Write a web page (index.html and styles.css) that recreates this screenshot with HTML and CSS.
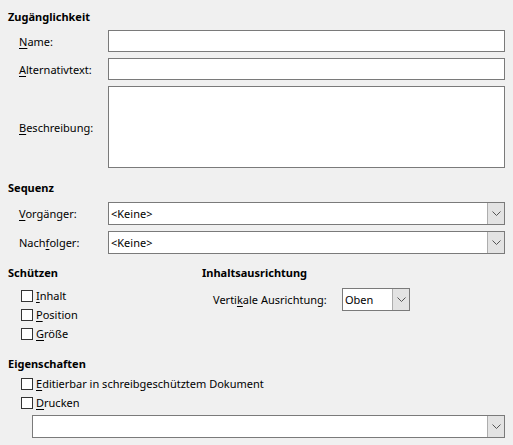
FILE: index.html
```html
<!DOCTYPE html>
<html lang="de">
<head>
<meta charset="utf-8">
<link rel="stylesheet" href="styles.css">
</head>
<body>
<div class="dlg">
  <div class="head h-first">Zugänglichkeit</div>
  <div class="form">
    <label class="lbl"><u>N</u>ame:</label>
    <div class="field"></div>
    <label class="lbl"><u>A</u>lternativtext:</label>
    <div class="field"></div>
    <label class="lbl"><u>B</u>eschreibung:</label>
    <div class="field area"></div>
  </div>

  <div class="head h-seq">Sequenz</div>
  <div class="form form-seq">
    <label class="lbl"><u>V</u>orgänger:</label>
    <div class="combo"><span class="val">&lt;Keine&gt;</span><span class="btn"><svg width="9" height="5" viewBox="0 0 9 5"><path d="M0.5 0.5 L4.5 4.5 L8.5 0.5" fill="none" stroke="#555" stroke-width="1"/></svg></span></div>
    <label class="lbl">Nach<u>f</u>olger:</label>
    <div class="combo"><span class="val">&lt;Keine&gt;</span><span class="btn"><svg width="9" height="5" viewBox="0 0 9 5"><path d="M0.5 0.5 L4.5 4.5 L8.5 0.5" fill="none" stroke="#555" stroke-width="1"/></svg></span></div>
  </div>

  <div class="cols">
    <div class="col">
      <div class="head">Schützen</div>
      <div class="checks">
        <div class="chk"><span class="box"></span><span><u>I</u>nhalt</span></div>
        <div class="chk"><span class="box"></span><span><u>P</u>osition</span></div>
        <div class="chk"><span class="box"></span><span><u>G</u>röße</span></div>
      </div>
    </div>
    <div class="col">
      <div class="head">Inhaltsausrichtung</div>
      <div class="valign">
        <label class="lbl2">Verti<u>k</u>ale Ausrichtung:</label>
        <div class="combo small"><span class="val">Oben</span><span class="btn"><svg width="9" height="5" viewBox="0 0 9 5"><path d="M0.5 0.5 L4.5 4.5 L8.5 0.5" fill="none" stroke="#555" stroke-width="1"/></svg></span></div>
      </div>
    </div>
  </div>

  <div class="head h-eig">Eigenschaften</div>
  <div class="checks checks-eig">
    <div class="chk"><span class="box"></span><span><u>E</u>ditierbar in schreibgeschütztem Dokument</span></div>
    <div class="chk"><span class="box"></span><span><u>D</u>rucken</span></div>
  </div>
  <div class="combo wide"><span class="val"></span><span class="btn"><svg width="9" height="5" viewBox="0 0 9 5"><path d="M0.5 0.5 L4.5 4.5 L8.5 0.5" fill="none" stroke="#555" stroke-width="1"/></svg></span></div>
</div>
</body>
</html>
```
FILE: styles.css
```css
html, body {
  margin: 0;
  padding: 0;
  background: #f0f0f0;
}
body {
  font-family: "Noto Sans", "Open Sans", sans-serif;
  font-size: 11px;
  color: #000;
}
u {
  text-decoration: underline;
  text-underline-offset: 2px;
}
.dlg {
  padding: 9px 8px 0 8px;
}
.head {
  font-weight: bold;
  height: 16px;
  line-height: 16px;
}
.form {
  display: grid;
  grid-template-columns: 100px 1fr;
  row-gap: 6px;
  align-items: center;
  margin-top: 5px;
}
.lbl {
  padding-left: 11px;
}
.field {
  height: 20px;
  background: #fff;
  border: 1px solid #7a7a7a;
}
.field.area {
  height: 80px;
}
.h-seq {
  margin-top: 12px;
}
.form-seq {
  margin-top: 6px;
  row-gap: 6px;
}
.combo {
  display: flex;
  height: 21px;
  background: #fff;
  border: 1px solid #7a7a7a;
}
.combo .val {
  flex: 1;
  line-height: 21px;
  padding-left: 2px;
}
.combo .btn {
  width: 16px;
  background: #e3e3e3;
  border-left: 1px solid #adadad;
  display: flex;
  align-items: center;
  justify-content: center;
}
.cols {
  display: grid;
  grid-template-columns: 194px 1fr;
  margin-top: 11px;
}
.checks {
  margin-top: 5px;
  display: flex;
  flex-direction: column;
}
.checks-eig {
  margin-top: 2px;
}
.chk {
  display: flex;
  align-items: center;
  height: 19px;
  padding-left: 13px;
}
.box {
  width: 10px;
  height: 10px;
  border: 1px solid #333;
  background: #fff;
  margin-right: 3px;
  flex: none;
}
.valign {
  display: flex;
  align-items: center;
  margin-top: 7px;
  padding-left: 11px;
}
.lbl2 {
  width: 129px;
}
.combo.small {
  width: 66px;
}
.h-eig {
  margin-top: 13px;
}
.combo.wide {
  margin-left: 24px;
  margin-top: 3px;
}
```
